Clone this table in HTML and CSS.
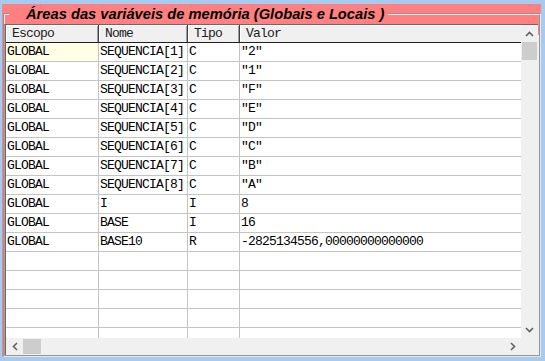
FILE: index.html
```html
<!DOCTYPE html>
<html>
<head>
<meta charset="utf-8">
<link rel="stylesheet" href="styles.css">
</head>
<body>
<div class="win">
  <fieldset class="group">
    <legend class="title">Áreas das variáveis de memória (Globais e Locais )</legend>
    <div class="grid">
      <div class="main">
        <div class="table">
          <div class="row head">
            <div class="c c1">Escopo</div><div class="c c2">Nome</div><div class="c c3">Tipo</div><div class="c c4">Valor</div>
          </div>
          <div class="row"><div class="c c1 sel">GLOBAL</div><div class="c c2">SEQUENCIA[1]</div><div class="c c3">C</div><div class="c c4">"2"</div></div>
          <div class="row"><div class="c c1">GLOBAL</div><div class="c c2">SEQUENCIA[2]</div><div class="c c3">C</div><div class="c c4">"1"</div></div>
          <div class="row"><div class="c c1">GLOBAL</div><div class="c c2">SEQUENCIA[3]</div><div class="c c3">C</div><div class="c c4">"F"</div></div>
          <div class="row"><div class="c c1">GLOBAL</div><div class="c c2">SEQUENCIA[4]</div><div class="c c3">C</div><div class="c c4">"E"</div></div>
          <div class="row"><div class="c c1">GLOBAL</div><div class="c c2">SEQUENCIA[5]</div><div class="c c3">C</div><div class="c c4">"D"</div></div>
          <div class="row"><div class="c c1">GLOBAL</div><div class="c c2">SEQUENCIA[6]</div><div class="c c3">C</div><div class="c c4">"C"</div></div>
          <div class="row"><div class="c c1">GLOBAL</div><div class="c c2">SEQUENCIA[7]</div><div class="c c3">C</div><div class="c c4">"B"</div></div>
          <div class="row"><div class="c c1">GLOBAL</div><div class="c c2">SEQUENCIA[8]</div><div class="c c3">C</div><div class="c c4">"A"</div></div>
          <div class="row"><div class="c c1">GLOBAL</div><div class="c c2">I</div><div class="c c3">I</div><div class="c c4">8</div></div>
          <div class="row"><div class="c c1">GLOBAL</div><div class="c c2">BASE</div><div class="c c3">I</div><div class="c c4">16</div></div>
          <div class="row"><div class="c c1">GLOBAL</div><div class="c c2">BASE10</div><div class="c c3">R</div><div class="c c4">-2825134556,00000000000000</div></div>
          <div class="row"><div class="c c1"></div><div class="c c2"></div><div class="c c3"></div><div class="c c4"></div></div>
          <div class="row"><div class="c c1"></div><div class="c c2"></div><div class="c c3"></div><div class="c c4"></div></div>
          <div class="row"><div class="c c1"></div><div class="c c2"></div><div class="c c3"></div><div class="c c4"></div></div>
          <div class="row"><div class="c c1"></div><div class="c c2"></div><div class="c c3"></div><div class="c c4"></div></div>
          <div class="row"><div class="c c1"></div><div class="c c2"></div><div class="c c3"></div><div class="c c4"></div></div>
        </div>
        <div class="vscroll">
          <div class="arrow"><svg width="9" height="6" viewBox="0 0 9 6"><path d="M1 5 L4.5 1.5 L8 5" fill="none" stroke="#606060" stroke-width="1.6"/></svg></div>
          <div class="vthumb"></div>
          <div class="track"></div>
          <div class="arrow"><svg width="9" height="6" viewBox="0 0 9 6"><path d="M1 1 L4.5 4.5 L8 1" fill="none" stroke="#606060" stroke-width="1.6"/></svg></div>
        </div>
      </div>
      <div class="hbar">
        <div class="arrow"><svg width="6" height="9" viewBox="0 0 6 9"><path d="M5 1 L1.5 4.5 L5 8" fill="none" stroke="#606060" stroke-width="1.6"/></svg></div>
        <div class="hthumb"></div>
        <div class="track"></div>
        <div class="arrow"><svg width="6" height="9" viewBox="0 0 6 9"><path d="M1 1 L4.5 4.5 L1 8" fill="none" stroke="#606060" stroke-width="1.6"/></svg></div>
        <div class="corner"></div>
      </div>
    </div>
  </fieldset>
</div>
</body>
</html>
```

FILE: styles.css
```css
html, body {
  margin: 0;
  padding: 0;
  background: #a6caf0;
}
body {
  width: 545px;
  height: 361px;
  overflow: hidden;
}
.win {
  margin: 4px 0 0 2px;
  width: 539px;
  height: 353px;
  background: #ff8080;
  box-sizing: border-box;
  padding: 0 0 0 1px;
}
.group {
  margin: 0;
  padding: 0;
  width: 538px;
  height: 353px;
  box-sizing: border-box;
  border: 2px groove #e8e8e8;
  min-width: 0;
  background: linear-gradient(#ff8080 0 20px, #f0f0f0 20px);
}
.title {
  margin-left: 4px;
  padding: 0 4px 0 17px;
  height: 20px;
  line-height: 20px;
  font-family: "Liberation Sans", Arial, sans-serif;
  font-style: italic;
  font-weight: bold;
  font-size: 14.7px;
  color: #000;
}
.grid {
  margin: 0 0 0 -1px;
  width: 534px;
  height: 331px;
  box-sizing: border-box;
  border-top: 1px solid #696969;
  border-left: 1px solid #a0a0a0;
  box-shadow: inset 1px 0 0 #696969;
  background: #fff;
  display: flex;
  flex-direction: column;
  padding-left: 1px;
}
.main {
  display: flex;
  height: 313px;
}
.table {
  flex: 1;
  overflow: hidden;
  font-family: "Liberation Mono", "Courier New", monospace;
  font-size: 13px;
  letter-spacing: -0.8px;
  color: #000;
}
.row {
  display: flex;
  height: 19px;
  box-sizing: border-box;
  border-bottom: 1px solid #c4c4c4;
}
.c {
  box-sizing: border-box;
  height: 18px;
  line-height: 18px;
  border-right: 1px solid #c4c4c4;
  white-space: nowrap;
  overflow: visible;
  padding-left: 1px;
}
.c1 { width: 93px; padding-left: 1px; }
.c2 { width: 89px; }
.c3 { width: 52px; }
.c4 { flex: 1; border-right: 0; }
.sel { background: #ffffe6; }
.head {
  height: 18px;
  border-bottom: 1px solid #202020;
  background: #f0f0f0;
}
.head .c {
  height: 17px;
  line-height: 17px;
  padding-left: 6px;
  border-right: 1px solid #404040;
  box-shadow: inset 1px 1px 0 #fff, inset -1px 0 0 #a0a0a0;
  color: #202020;
}
.head .c4 { border-right: 0; box-shadow: inset 1px 1px 0 #fff; }
.vscroll {
  width: 17px;
  display: flex;
  flex-direction: column;
  background: #f0f0f0;
}
.vscroll .arrow {
  height: 17px;
  display: flex;
  align-items: center;
  justify-content: center;
}
.vthumb {
  height: 18px;
  margin: 0 1px;
  background: #cdcdcd;
}
.track { flex: 1; }
.hbar {
  height: 17px;
  display: flex;
  background: #f0f0f0;
}
.hbar .arrow {
  width: 17px;
  display: flex;
  align-items: center;
  justify-content: center;
}
.hthumb {
  width: 18px;
  margin: 1px 0;
  background: #cdcdcd;
}
.corner {
  width: 17px;
  background: #f0f0f0;
}
```
